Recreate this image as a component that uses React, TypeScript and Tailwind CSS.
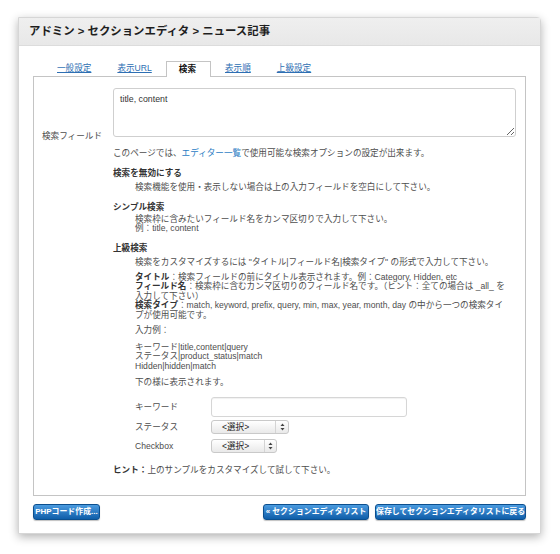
import React from 'react';

const font = { fontFamily: '"Liberation Sans", "Noto Sans CJK JP", sans-serif' };

const tabs = [
  { label: '一般設定' },
  { label: '表示URL' },
  { label: '検索', active: true },
  { label: '表示順' },
  { label: '上級設定' },
];

function SelectBox({ width, split }: { width: string; split: string }) {
  return (
    <div className={`${width} h-[14px] flex items-center rounded-[3px] border border-[#c9c9c9] bg-gradient-to-b from-[#ffffff] to-[#e9e9e9] text-[#222]`}>
      <span className="flex-1 pl-[10px] leading-[12px]">&lt;選択&gt;</span>
      <span className={`${split} h-full border-l border-[#d4d4d4] flex items-center justify-center`}>
        <svg width="5" height="8" viewBox="0 0 5 8">
          <path d="M2.5 0.5 L4.5 3 L0.5 3 Z" fill="#444" />
          <path d="M2.5 7.5 L4.5 5 L0.5 5 Z" fill="#444" />
        </svg>
      </span>
    </div>
  );
}

function BlueButton({ children, width }: { children: React.ReactNode; width: string }) {
  return (
    <button className={`${width} h-[16px] rounded-[3px] border border-[#0c4f8e] bg-gradient-to-b from-[#4a9be0] to-[#0d5ea9] text-white font-bold text-[7.9px] leading-[14px] whitespace-nowrap shadow-[0_1px_1px_rgba(0,0,0,0.25)]`}>
      {children}
    </button>
  );
}

export default function App() {
  return (
    <div className="w-[560px] h-[554px] bg-white overflow-hidden pt-[17px] pl-[18px]" style={font}>
      <div className="w-[523px] h-[517px] bg-white border border-[#d6d6d6] rounded-tr-[4px] shadow-[0_3px_10px_rgba(0,0,0,0.3)] flex flex-col">
        {/* title bar */}
        <div className="h-[28px] bg-gradient-to-b from-[#efefef] to-[#e8e8e8] border-b border-[#dcdcdc] flex items-center pl-[10px] text-[11.4px] font-bold text-[#1e1e1e]">
          アドミン &gt; セクションエディタ &gt; ニュース記事
        </div>

        <div className="px-[14px] pt-[15px] pb-[13px] flex flex-col">
          {/* tabs */}
          <div className="flex pl-[12px] gap-[2px] h-[15px] relative z-10">
            {tabs.map((t) =>
              t.active ? (
                <div
                  key={t.label}
                  className="h-[16px] pl-[12px] pr-[14px] border border-b-0 border-[#c4c4c4] bg-white text-[8.6px] font-bold text-[#111] leading-[14px]"
                >
                  {t.label}
                </div>
              ) : (
                <div key={t.label} className="px-[12px] text-[8.6px] leading-[14px] text-[#2e6fb3] underline underline-offset-[1px]">
                  {t.label}
                </div>
              )
            )}
          </div>

          {/* main box */}
          <div className="border border-[#c4c4c4] flex text-[8.6px] text-[#4d4d4d] pb-[20px]">
            <div className="w-[79px] shrink-0 pr-[11px] pt-[54px] text-right leading-[10px] whitespace-nowrap">
              検索フィールド
            </div>
            <div className="flex-1 pr-[9px]">
              <textarea
                readOnly
                defaultValue="title, content"
                className="mt-[11px] block w-[403px] h-[49px] border border-[#cfcfcf] rounded-[3px] px-[6px] py-[5px] text-[8.8px] leading-[10px] text-[#333] outline-none"
                style={font}
              />
              <div className="mt-[11px] leading-[10px] whitespace-nowrap">
                このページでは、<span className="text-[#2a7cc4]">エディター一覧</span>で使用可能な検索オプションの設定が出来ます。
              </div>

              <div className="mt-[10px] leading-[10px] font-bold text-[#333]">検索を無効にする</div>
              <div className="mt-[4px] pl-[22px] leading-[10px] whitespace-nowrap">
                検索機能を使用・表示しない場合は上の入力フィールドを空白にして下さい。
              </div>

              <div className="mt-[10px] leading-[10px] font-bold text-[#333]">シンプル検索</div>
              <div className="mt-[3px] pl-[22px] leading-[9.5px] whitespace-nowrap">
                検索枠に含みたいフィールド名をカンマ区切りで入力して下さい。
                <br />
                例：title, content
              </div>

              <div className="mt-[9px] leading-[10px] font-bold text-[#333]">上級検索</div>
              <div className="pl-[22px]">
                <div className="mt-[4px] leading-[10px] whitespace-nowrap">
                  検索をカスタマイズするには "タイトル|フィールド名|検索タイプ" の形式で入力して下さい。
                </div>
                <div className="mt-[6px] leading-[9.5px] whitespace-nowrap">
                  <b className="text-[#333]">タイトル</b>：検索フィールドの前にタイトル表示されます。例：Category, Hidden, etc
                  <br />
                  <b className="text-[#333]">フィールド名</b>：検索枠に含むカンマ区切りのフィールド名です。（ヒント：全ての場合は _all_ を
                  <br />
                  入力して下さい）
                  <br />
                  <b className="text-[#333]">検索タイプ</b>：match, keyword, prefix, query, min, max, year, month, day の中から一つの検索タイ
                  <br />
                  プが使用可能です。
                </div>
                <div className="mt-[5.5px] leading-[9.5px]">入力例：</div>
                <div className="mt-[7.5px] leading-[9.5px] whitespace-nowrap">
                  キーワード|title,content|query
                  <br />
                  ステータス|product_status|match
                  <br />
                  Hidden|hidden|match
                </div>
                <div className="mt-[6.5px] leading-[9.5px]">下の様に表示されます。</div>

                {/* sample form */}
                <div className="mt-[10px] flex items-center h-[20px]">
                  <span className="w-[76px]">キーワード</span>
                  <div className="w-[196px] h-[20px] border border-[#d6d6d6] rounded-[3px] shadow-[inset_0_1px_1px_rgba(0,0,0,0.06)]" />
                </div>
                <div className="mt-[3px] flex items-center h-[14px]">
                  <span className="w-[76px]">ステータス</span>
                  <SelectBox width="w-[78px]" split="w-[13px]" />
                </div>
                <div className="mt-[5px] flex items-center h-[14px]">
                  <span className="w-[76px]">Checkbox</span>
                  <SelectBox width="w-[66px]" split="w-[12px]" />
                </div>
              </div>

              <div className="mt-[12px] leading-[10px] whitespace-nowrap">
                <b className="text-[#333]">ヒント：</b>上のサンプルをカスタマイズして試して下さい。
              </div>
            </div>
          </div>

          {/* footer buttons */}
          <div className="mt-[8px] flex items-center">
            <BlueButton width="w-[67px]">PHPコード作成...</BlueButton>
            <div className="flex-1" />
            <div className="flex gap-[6px]">
              <BlueButton width="w-[106px]">« セクションエディタリスト</BlueButton>
              <BlueButton width="w-[151px]">保存してセクションエディタリストに戻る</BlueButton>
            </div>
          </div>
        </div>
      </div>
    </div>
  );
}
